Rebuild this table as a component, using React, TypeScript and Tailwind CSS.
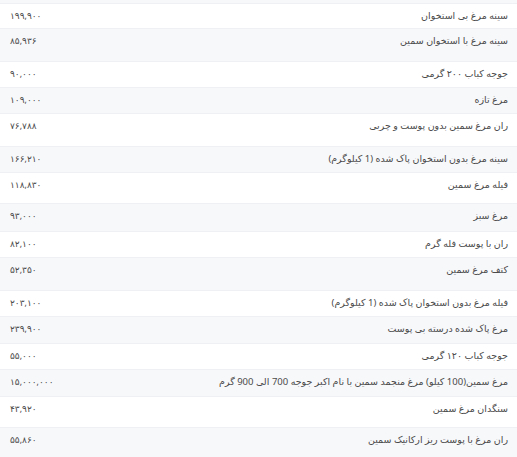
const rows: { name: string; price: string; h: string }[] = [
  { name: "سینه مرغ بی استخوان", price: "۱۹۹,۹۰۰", h: "h-[25px]" },
  { name: "سینه مرغ با استخوان سمین", price: "۸۵,۹۳۶", h: "h-[33px]" },
  { name: "جوجه کباب ۲۰۰ گرمی", price: "۹۰,۰۰۰", h: "h-[26px]" },
  { name: "مرغ تازه", price: "۱۰۹,۰۰۰", h: "h-[26px]" },
  { name: "ران مرغ سمین بدون پوست و چربی", price: "۷۶,۷۸۸", h: "h-[33px]" },
  { name: "سینه مرغ بدون استخوان پاک شده (1 کیلوگرم)", price: "۱۶۶,۲۱۰", h: "h-[26px]" },
  { name: "فیله مرغ سمین", price: "۱۱۸,۸۳۰", h: "h-[31px]" },
  { name: "مرغ سبز", price: "۹۳,۰۰۰", h: "h-[28px]" },
  { name: "ران با پوست فله گرم", price: "۸۲,۱۰۰", h: "h-[26px]" },
  { name: "کتف مرغ سمین", price: "۵۲,۳۵۰", h: "h-[33px]" },
  { name: "فیله مرغ بدون استخوان پاک شده (1 کیلوگرم)", price: "۲۰۳,۱۰۰", h: "h-[26px]" },
  { name: "مرغ پاک شده درسته بی پوست", price: "۲۳۹,۹۰۰", h: "h-[27px]" },
  { name: "جوجه کباب ۱۲۰ گرمی", price: "۵۵,۰۰۰", h: "h-[26px]" },
  { name: "مرغ سمین(100 کیلو) مرغ منجمد سمین با نام اکبر جوجه 700 الی 900 گرم", price: "۱۵,۰۰۰,۰۰۰", h: "h-[27px]" },
  { name: "سنگدان مرغ سمین", price: "۴۳,۹۲۰", h: "h-[31px]" },
  { name: "ران مرغ با پوست ریز ارکانیک سمین", price: "۵۵,۸۶۰", h: "h-[33px]" },
];

export default function App() {
  return (
    <div
      dir="rtl"
      className="w-[517px] h-[457px] overflow-hidden bg-white text-[#4a4a4a] text-[9.5px]"
      style={{ fontFamily: '"Noto Sans", "DejaVu Sans", sans-serif' }}
    >
      {/* tail of the previous row */}
      <div className="h-[3px] bg-[#f7f8fa]" />
      {rows.map((row, i) => (
        <div
          key={row.name}
          className={`flex justify-between items-start pt-[4px] pr-[9px] pl-[10px] border-t border-[#eef0f3] ${row.h} ${
            i % 2 === 1 ? "bg-[#f7f8fa]" : "bg-white"
          }`}
        >
          <span className="leading-[16px]">{row.name}</span>
          <span className="text-[9px] leading-[16px] tracking-[-0.8px]">{row.price}</span>
        </div>
      ))}
    </div>
  );
}
